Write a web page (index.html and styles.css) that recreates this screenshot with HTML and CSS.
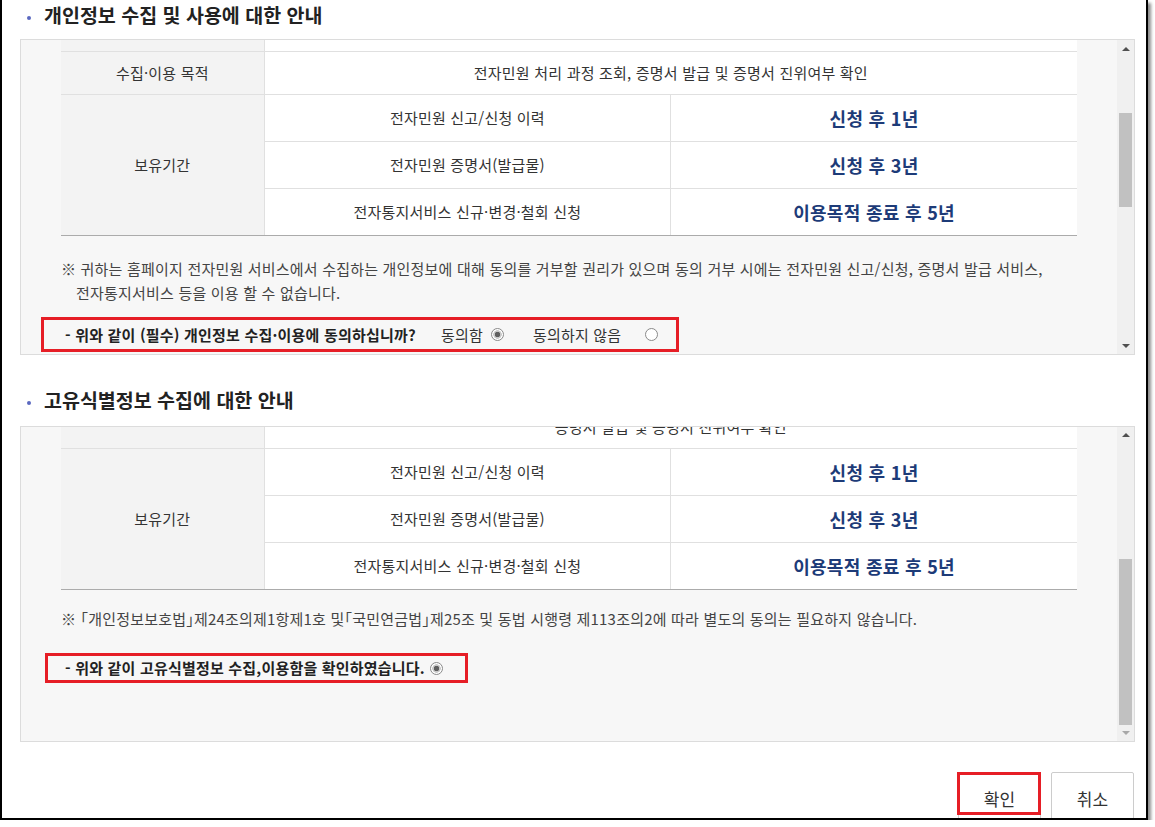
FILE: index.html
```html
<!DOCTYPE html>
<html lang="ko">
<head>
  <meta charset="UTF-8">
  <title>개인정보 수집 및 이용 동의</title>
  <meta name="viewport" content="width=device-width, initial-scale=1.0">
  <link rel="stylesheet" href="styles.css">
</head>
<body>
  <div class="window">
    <h2 class="sec-title">개인정보 수집 및 사용에 대한 안내</h2>
    <div class="scroll-box">
      <div class="scroll-view">
        <table class="info-table table-main">
          <colgroup><col class="col-head"><col class="col-half"><col class="col-half"></colgroup>
          <tr class="cut-row"><th></th><td colspan="2"></td></tr>
          <tr><th>수집·이용 목적</th><td colspan="2">전자민원 처리 과정 조회, 증명서 발급 및 증명서 진위여부 확인</td></tr>
          <tr><th rowspan="3">보유기간</th><td>전자민원 신고/신청 이력</td><td class="term">신청 후 1년</td></tr>
          <tr><td>전자민원 증명서(발급물)</td><td class="term">신청 후 3년</td></tr>
          <tr class="last"><td>전자통지서비스 신규·변경·철회 신청</td><td class="term">이용목적 종료 후 5년</td></tr>
        </table>
        <p class="note note-main">※ 귀하는 홈페이지 전자민원 서비스에서 수집하는 개인정보에 대해 동의를 거부할 권리가 있으며 동의 거부 시에는 전자민원 신고/신청, 증명서 발급 서비스,<br>전자통지서비스 등을 이용 할 수 없습니다.</p>
        <div class="agree agree-main">
          <span class="agree-q">- 위와 같이 (필수) 개인정보 수집·이용에 동의하십니까?</span>
          <span class="opt">동의함<i class="radio on"></i></span>
          <span class="opt opt-no">동의하지 않음<i class="radio"></i></span>
        </div>
      </div>
      <div class="scrollbar">
        <span class="sb-arrow up"></span>
        <div class="sb-track"><div class="sb-thumb" style="margin-top:56px;height:94px"></div></div>
        <span class="sb-arrow down"></span>
      </div>
    </div>

    <h2 class="sec-title sec-second">고유식별정보 수집에 대한 안내</h2>
    <div class="scroll-box">
      <div class="scroll-view">
        <table class="info-table table-unique">
          <colgroup><col class="col-head"><col class="col-half"><col class="col-half"></colgroup>
          <tr class="cut-row-text"><th></th><td colspan="2">증명서 발급 및 증명서 진위여부 확인</td></tr>
          <tr><th rowspan="3">보유기간</th><td>전자민원 신고/신청 이력</td><td class="term">신청 후 1년</td></tr>
          <tr><td>전자민원 증명서(발급물)</td><td class="term">신청 후 3년</td></tr>
          <tr class="last"><td>전자통지서비스 신규·변경·철회 신청</td><td class="term">이용목적 종료 후 5년</td></tr>
        </table>
        <p class="note note-unique">※ 「개인정보보호법」제24조의제1항제1호 및「국민연금법」제25조 및 동법 시행령 제113조의2에 따라 별도의 동의는 필요하지 않습니다.</p>
        <div class="agree agree-unique">
          <span class="agree-q">- 위와 같이 고유식별정보 수집,이용함을 확인하였습니다.</span>
          <i class="radio on"></i>
        </div>
      </div>
      <div class="scrollbar">
        <span class="sb-arrow up"></span>
        <div class="sb-track"><div class="sb-thumb" style="margin-top:115px;height:166px"></div></div>
        <span class="sb-arrow down off"></span>
      </div>
    </div>

    <div class="btns">
      <button class="btn btn-ok">확인</button>
      <button class="btn">취소</button>
    </div>
  </div>
</body>
</html>
```

FILE: styles.css
```css
body {
  margin: 0;
  background: #fff;
  font-family: "Noto Sans CJK KR", "Noto Sans", sans-serif;
  color: #333;
}
.window {
  box-sizing: border-box;
  width: 1148px;
  height: 820px;
  border: 2px solid #000;
  border-top: 0;
  box-shadow: 3px 3px 3px rgba(0,0,0,0.45);
  padding: 3px 11px 0 18px;
  overflow: hidden;
  background: #fff;
}
.sec-title {
  margin: 0 0 12px;
  font-size: 19.5px;
  line-height: 24px;
  font-weight: 700;
  color: #222;
}
.sec-title::before {
  content: "";
  display: inline-block;
  width: 4px;
  height: 4px;
  border-radius: 50%;
  background: #5a68c0;
  margin: 0 13px 0 7px;
  vertical-align: middle;
}
.sec-second {
  margin-top: 33px;
  margin-bottom: 14px;
}
.scroll-box {
  display: flex;
  box-sizing: border-box;
  height: 316px;
  border: 1px solid #dcdcdc;
  background: #f7f7f7;
}
.scroll-view {
  flex: 1;
  overflow: hidden;
  padding: 0 40px;
}
.scrollbar {
  width: 17px;
  display: flex;
  flex-direction: column;
  background: #f0f0f0;
}
.sb-arrow {
  height: 17px;
  display: flex;
  align-items: center;
  justify-content: center;
}
.sb-arrow::before {
  content: "";
  border-left: 4px solid transparent;
  border-right: 4px solid transparent;
}
.sb-arrow.up::before {
  border-bottom: 4px solid #505050;
}
.sb-arrow.down::before {
  border-top: 4px solid #505050;
}
.sb-arrow.off::before {
  border-top-color: #a8a8a8;
}
.sb-track {
  flex: 1;
  padding: 0 2px;
}
.sb-thumb {
  background: #c1c1c1;
}

/* table */
.info-table {
  width: 100%;
  table-layout: fixed;
  border-collapse: collapse;
  background: #fff;
  font-size: 15px;
  letter-spacing: 0.2px;
  color: #333;
  text-align: center;
}
.table-main {
  margin-top: -36px;
}
.table-unique {
  margin-top: -44px;
}
.col-head {
  width: 20%;
}
.col-half {
  width: 40%;
}
.info-table th,
.info-table td {
  border-top: 1px solid #e0e0e0;
  padding: 10px;
  line-height: 22px;
}
.info-table th {
  background: #f3f3f3;
  font-weight: normal;
}
.info-table td {
  border-left: 1px solid #e0e0e0;
}
.info-table .last td,
.info-table th[rowspan] {
  border-bottom: 1px solid #ababab;
}
.cut-row th,
.cut-row td {
  height: 46px;
  padding: 0;
}
.cut-row-text td {
  padding-top: 32px;
}
.info-table .term {
  font-size: 18px;
  letter-spacing: 0.3px;
  line-height: 26px;
  font-weight: 700;
  color: #1d3b78;
}

/* notice + agreement */
.note {
  margin: 21px 0 0;
  font-size: 15px;
  letter-spacing: 0.2px;
  line-height: 24px;
  color: #444;
  padding-left: 15px;
  text-indent: -15px;
}
.note-unique {
  margin-top: 17px;
  font-feature-settings: "halt";
}
.agree {
  display: flex;
  align-items: center;
  width: fit-content;
  border: 3px solid #e61e26;
  font-size: 15px;
  letter-spacing: 0.2px;
  color: #333;
}
.agree-main {
  margin: 12px 0 0 -20px;
  padding: 0 18px 0 21px;
  line-height: 29px;
}
.agree-unique {
  margin: 22px 0 0 -16px;
  padding: 0 22px 0 17px;
  line-height: 24px;
}
.agree-q {
  font-weight: 700;
  color: #222;
}
.agree-unique .radio {
  margin-left: 5px;
}
.opt {
  display: flex;
  align-items: center;
  gap: 8px;
  margin-left: 25px;
}
.opt-no {
  gap: 24px;
  margin-left: 29px;
}
.radio {
  display: inline-block;
  box-sizing: border-box;
  width: 13px;
  height: 13px;
  border: 1px solid #8a8a8a;
  border-radius: 50%;
  background: #fff;
}
.radio.on {
  background: radial-gradient(circle, #5f5f5f 0 2.5px, #c9c9c9 3px 4px, #fff 4.5px);
}

/* buttons */
.btns {
  display: flex;
  justify-content: flex-end;
  gap: 10px;
  margin-top: 30px;
  padding-right: 1px;
}
.btn {
  width: 83px;
  height: 52px;
  border: 1px solid #ccc;
  border-radius: 2px;
  background: #fff;
  font-family: inherit;
  font-size: 17px;
  color: #333;
  padding: 0;
}
.btn-ok {
  position: relative;
}
.btn-ok::after {
  content: "";
  position: absolute;
  left: -2px;
  top: -1px;
  width: 84px;
  height: 43px;
  border: 3px solid #e61e26;
  box-sizing: border-box;
}
```
